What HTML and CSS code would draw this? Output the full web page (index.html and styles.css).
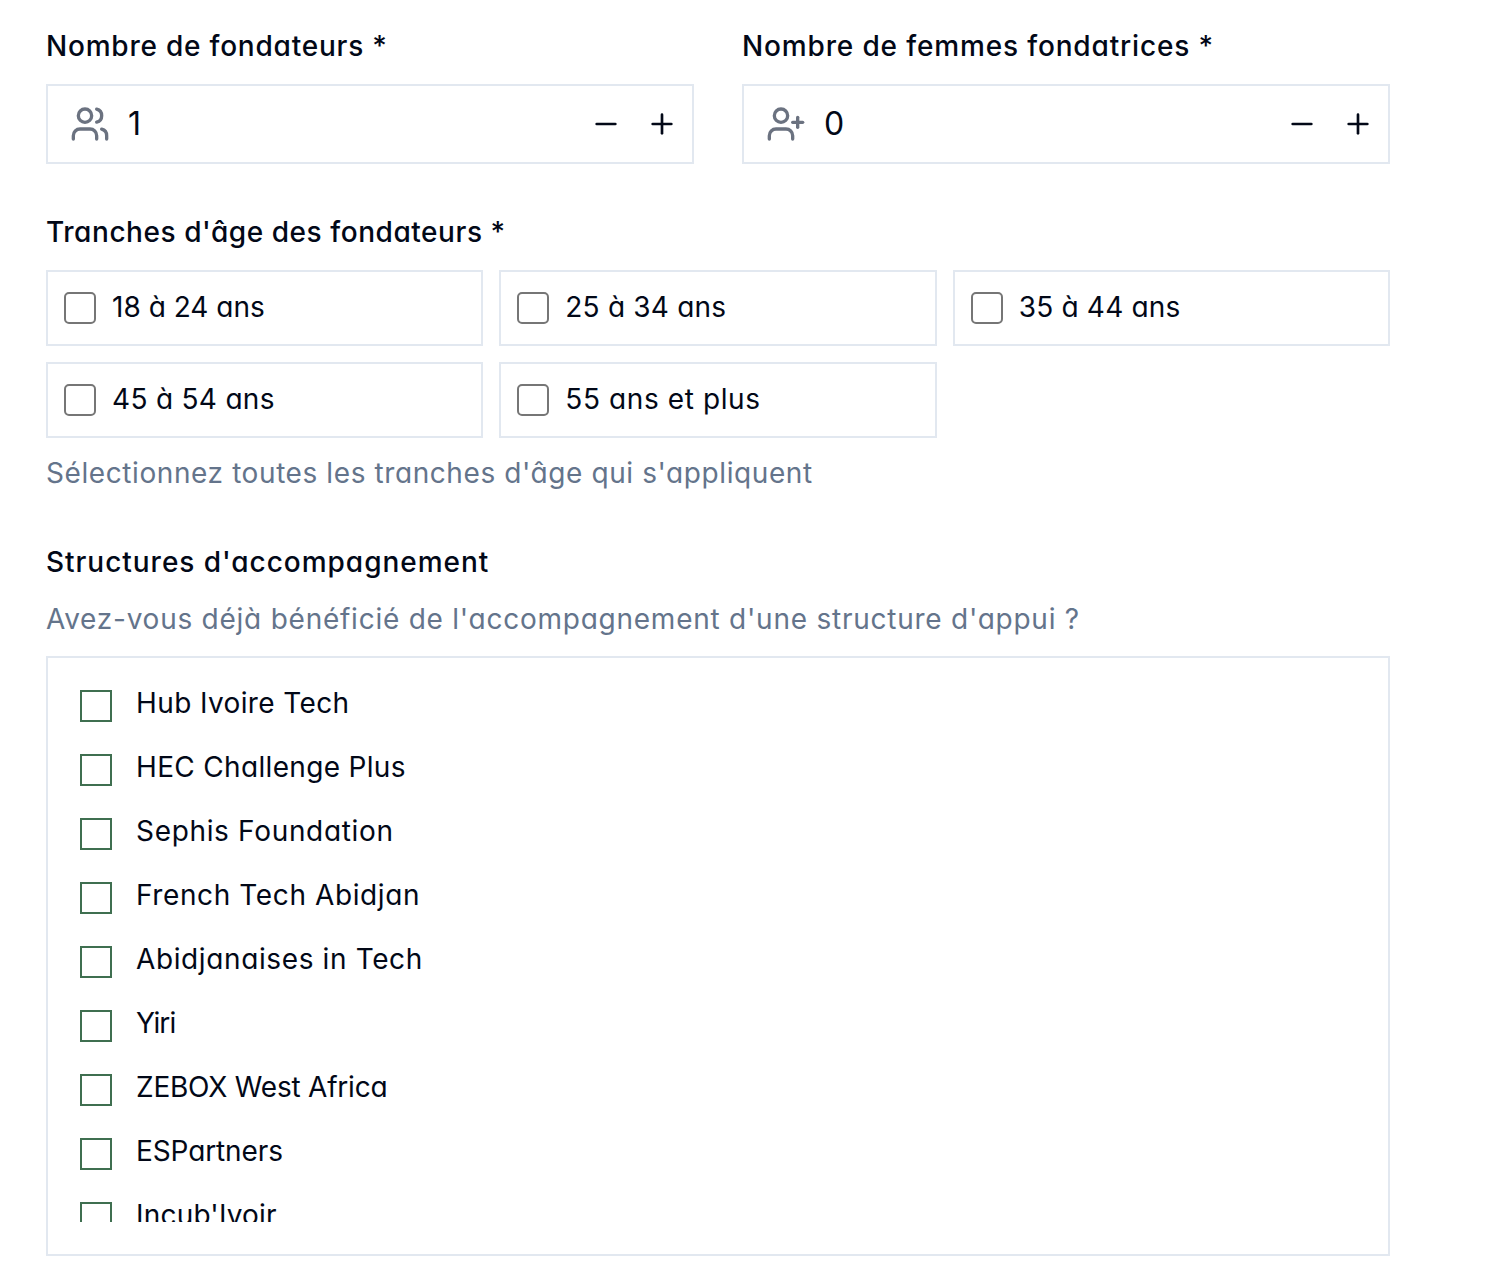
FILE: index.html
```html
<!DOCTYPE html>
<html lang="fr">
<head>
<meta charset="utf-8">
<title>Fondateurs et accompagnement</title>
<link rel="stylesheet" href="styles.css">
</head>
<body>
<main class="form">
  <section class="counters">
    <div class="field">
      <h2 class="label label-founders">Nombre de fondateurs *</h2>
      <div class="counter">
        <svg class="icon" viewBox="0 0 24 24"><path d="M16 21v-2a4 4 0 0 0-4-4H6a4 4 0 0 0-4 4v2"/><circle cx="9" cy="7" r="4"/><path d="M22 21v-2a4 4 0 0 0-3-3.87"/><path d="M16 3.13a4 4 0 0 1 0 7.75"/></svg>
        <span class="value">1</span>
        <button class="step" aria-label="Diminuer"><svg viewBox="0 0 24 24"><path d="M5 12h14"/></svg></button>
        <button class="step" aria-label="Augmenter"><svg viewBox="0 0 24 24"><path d="M5 12h14"/><path d="M12 5v14"/></svg></button>
      </div>
    </div>
    <div class="field">
      <h2 class="label label-women">Nombre de femmes fondatrices *</h2>
      <div class="counter">
        <svg class="icon" viewBox="0 0 24 24"><path d="M16 21v-2a4 4 0 0 0-4-4H6a4 4 0 0 0-4 4v2"/><circle cx="9" cy="7" r="4"/><path d="M19 8v6"/><path d="M22 11h-6"/></svg>
        <span class="value">0</span>
        <button class="step" aria-label="Diminuer"><svg viewBox="0 0 24 24"><path d="M5 12h14"/></svg></button>
        <button class="step" aria-label="Augmenter"><svg viewBox="0 0 24 24"><path d="M5 12h14"/><path d="M12 5v14"/></svg></button>
      </div>
    </div>
  </section>

  <section class="ages">
    <h2 class="label label-ages">Tranches d'âge des fondateurs *</h2>
    <div class="age-grid">
      <label class="age"><input type="checkbox" class="age-box"><span>18 à 24 ans</span></label>
      <label class="age"><input type="checkbox" class="age-box"><span>25 à 34 ans</span></label>
      <label class="age"><input type="checkbox" class="age-box"><span>35 à 44 ans</span></label>
      <label class="age"><input type="checkbox" class="age-box"><span>45 à 54 ans</span></label>
      <label class="age"><input type="checkbox" class="age-box"><span>55 ans et plus</span></label>
    </div>
    <p class="hint hint-ages">Sélectionnez toutes les tranches d'âge qui s'appliquent</p>
  </section>

  <section class="support">
    <h2 class="label label-support">Structures d'accompagnement</h2>
    <p class="hint hint-support">Avez-vous déjà bénéficié de l'accompagnement d'une structure d'appui ?</p>
    <div class="panel">
      <div class="options">
        <label class="option"><input type="checkbox" class="option-box"><span>Hub Ivoire Tech</span></label>
        <label class="option"><input type="checkbox" class="option-box"><span>HEC Challenge Plus</span></label>
        <label class="option"><input type="checkbox" class="option-box"><span>Sephis Foundation</span></label>
        <label class="option"><input type="checkbox" class="option-box"><span>French Tech Abidjan</span></label>
        <label class="option"><input type="checkbox" class="option-box"><span>Abidjanaises in Tech</span></label>
        <label class="option"><input type="checkbox" class="option-box"><span>Yiri</span></label>
        <label class="option"><input type="checkbox" class="option-box"><span>ZEBOX West Africa</span></label>
        <label class="option"><input type="checkbox" class="option-box"><span>ESPartners</span></label>
        <label class="option"><input type="checkbox" class="option-box"><span>Incub'Ivoir</span></label>
      </div>
    </div>
  </section>
</main>
</body>
</html>
```
FILE: styles.css
```css
* { box-sizing: border-box; }

body {
  margin: 0;
  background: #fff;
  color: #020817;
  font-family: Inter, "Liberation Sans", sans-serif;
  font-size: 28px;
  /* single-storey "a" */
  font-feature-settings: "cv11";
}

.form { padding: 32px 96px 26px 46px; }

.label {
  margin: 0 0 24px;
  font-size: 28px;
  font-weight: 500;
  line-height: 28px;
  white-space: nowrap;
}
.label-founders { letter-spacing: 0.78px; }
.label-women { letter-spacing: 0.85px; }
.label-ages { letter-spacing: 0.56px; }
.label-support { margin-bottom: 23px; letter-spacing: 0.97px; }

.counters {
  display: grid;
  grid-template-columns: 1fr 1fr;
  gap: 48px;
}

.counter {
  display: flex;
  align-items: center;
  height: 80px;
  padding: 0 14px 0 22px;
  border: 2px solid #e2e8f0;
}

svg {
  display: block;
  fill: none;
  stroke: currentColor;
  stroke-width: 2;
  stroke-linecap: round;
  stroke-linejoin: round;
}

.icon { width: 40px; height: 40px; color: #6b7280; }

.value {
  flex: 1;
  margin-left: 18px;
  font-size: 32px;
  line-height: 40px;
}

.step {
  margin: 0 0 0 24px;
  padding: 0;
  border: 0;
  background: none;
  color: inherit;
}
.step svg { width: 32px; height: 32px; }

.ages { margin-top: 54px; }

.age-grid {
  display: grid;
  grid-template-columns: repeat(3, 1fr);
  gap: 16px;
}

.age {
  display: flex;
  align-items: center;
  gap: 16px;
  height: 76px;
  padding: 0 16px;
  border: 2px solid #e2e8f0;
  line-height: 40px;
  letter-spacing: 0.2px;
}
.age span { padding-bottom: 2px; }
.age:nth-child(1) { letter-spacing: 0.02px; }
.age:nth-child(4) { letter-spacing: 0.3px; }
.age:nth-child(5) { letter-spacing: 0.6px; }

.age-box, .option-box {
  appearance: none;
  flex: none;
  width: 32px;
  height: 32px;
  margin: 0;
  background: #fff;
}
.age-box { border: 2px solid #767676; border-radius: 5px; }
.option-box { border: 2px solid #3f6f50; }

.hint {
  margin: 0;
  color: #64748b;
  line-height: 40px;
  white-space: nowrap;
}
.hint-ages { margin-top: 15px; letter-spacing: 0.59px; }
.hint-support { letter-spacing: 0.755px; }

.support { margin-top: 55px; }

.panel {
  height: 600px;
  margin-top: 17px;
  padding: 24px 32px 32px;
  border: 2px solid #e2e8f0;
}

.options {
  display: flex;
  flex-direction: column;
  gap: 32px;
  height: 100%;
  padding-top: 8px;
  overflow: hidden;
}

.option {
  display: flex;
  flex: none;
  align-items: flex-start;
  gap: 24px;
  height: 32px;
  line-height: 26px;
}
.option:nth-child(1) { letter-spacing: 0.38px; }
.option:nth-child(2) { letter-spacing: 0.33px; }
.option:nth-child(3) { letter-spacing: 0.67px; }
.option:nth-child(4) { letter-spacing: 0.61px; }
.option:nth-child(5) { letter-spacing: 0.62px; }
.option:nth-child(6) { letter-spacing: -0.82px; }
.option:nth-child(7) { letter-spacing: -0.22px; }
.option:nth-child(8) { letter-spacing: -0.12px; }
.option:nth-child(9) { letter-spacing: 0.19px; }
```
